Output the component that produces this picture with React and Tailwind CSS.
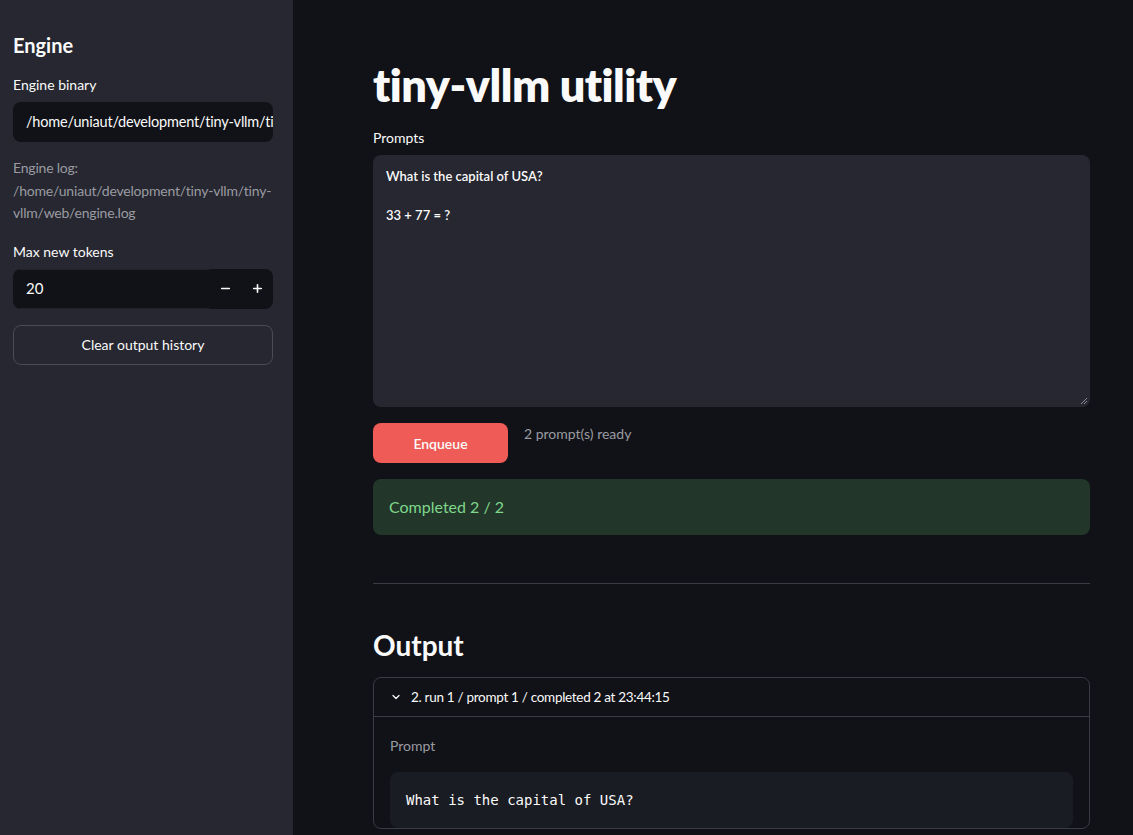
import { ChevronDown, Minus, Plus } from 'lucide-react';

const font = { fontFamily: 'Lato, "Noto Sans", sans-serif' };

const Sidebar = () => (
    <aside className="w-[293px] shrink-0 bg-[#262730] pl-[13px] pr-[20px] pt-[32px] text-[#fafafa]">
        <h2 className="text-[20px] font-bold leading-[26px]">Engine</h2>
        <label className="block mt-[17px] text-[14px] leading-[20px]">Engine binary</label>
        <div className="mt-[7px] h-[40px] rounded-lg bg-[#111217] pl-[13px] flex items-center overflow-hidden whitespace-nowrap text-[14.5px] tracking-[-0.2px]">
            /home/uniaut/development/tiny-vllm/tin
        </div>
        <p className="mt-[15px] text-[14px] leading-[22.5px] tracking-[-0.2px] text-[#9a9ba2] whitespace-nowrap">
            Engine log:<br />/home/uniaut/development/tiny-vllm/tiny-<br />vllm/web/engine.log
        </p>
        <label className="block mt-[17px] text-[14px] leading-[20px]">Max new tokens</label>
        <div className="mt-[7px] h-[40px] rounded-lg bg-[#111217] flex items-center overflow-hidden">
            <div className="flex-1 h-full flex items-center px-[13px] text-[15px] border-y border-[#22232b]">20</div>
            <button className="w-[32px] h-full flex items-center justify-center"><Minus size={13} strokeWidth={3} /></button>
            <button className="w-[32px] h-full flex items-center justify-center"><Plus size={13} strokeWidth={3} /></button>
        </div>
        <button className="mt-[16px] w-full h-[40px] rounded-lg border border-[#4a4b54] text-[14px]">
            Clear output history
        </button>
    </aside>
);

const App = () => (
    <div className="flex h-[835px] overflow-hidden bg-[#111217] text-[#fafafa]" style={font}>
        <Sidebar />
        <main className="flex-1 pl-[80px] pr-[43px] pt-[56px]">
            <h1 className="text-[45px] font-extrabold leading-[58px] tracking-[-0.5px]">tiny-vllm utility</h1>
            <label className="block mt-[14px] text-[14px] leading-[20px]">Prompts</label>
            <div className="relative mt-[7px] h-[252px] rounded-lg bg-[#262730] px-[13px] pt-[12px] text-[13px] leading-[19.5px] font-semibold">
                <div>What is the capital of USA?</div>
                <div>&nbsp;</div>
                <div>33 + 77 = ?</div>
                <svg className="absolute right-[2px] bottom-[2px]" width="8" height="8" viewBox="0 0 8 8">
                    <path d="M1 7 L7 1 M4 7 L7 4" stroke="#8a8b92" strokeWidth="1" />
                </svg>
            </div>
            <div className="mt-[16px] flex items-start gap-[16px]">
                <button className="w-[135px] h-[40px] rounded-lg bg-[#ef5b56] text-[14px] font-semibold">Enqueue</button>
                <span className="text-[14px] text-[#9a9ba2]">2 prompt(s) ready</span>
            </div>
            <div className="mt-[16px] h-[56px] rounded-lg bg-[#223629] px-[16px] flex items-center text-[16px] text-[#7fd68c]">
                Completed 2 / 2
            </div>
            <hr className="mt-[48px] border-t border-[#3a3b43]" />
            <h2 className="mt-[43px] text-[28px] font-bold leading-[36px]">Output</h2>
            <div className="mt-[14px] rounded-lg border border-[#3a3b43]">
                <div className="h-[39px] flex items-center gap-[9px] pl-[16px] border-b border-[#3a3b43] text-[13.5px] tracking-[-0.3px]">
                    <ChevronDown size={12} strokeWidth={2.5} />
                    2. run 1 / prompt 1 / completed 2 at 23:44:15
                </div>
                <div className="px-[16px] pt-[18px]">
                    <div className="text-[14px] text-[#9a9ba2]">Prompt</div>
                    <div className="mt-[16px] h-[56px] rounded-lg bg-[#1a1c23] px-[16px] flex items-center text-[14px]" style={{ fontFamily: '"DejaVu Sans Mono", monospace' }}>
                        What is the capital of USA?
                    </div>
                </div>
            </div>
        </main>
    </div>
);

export default App;
